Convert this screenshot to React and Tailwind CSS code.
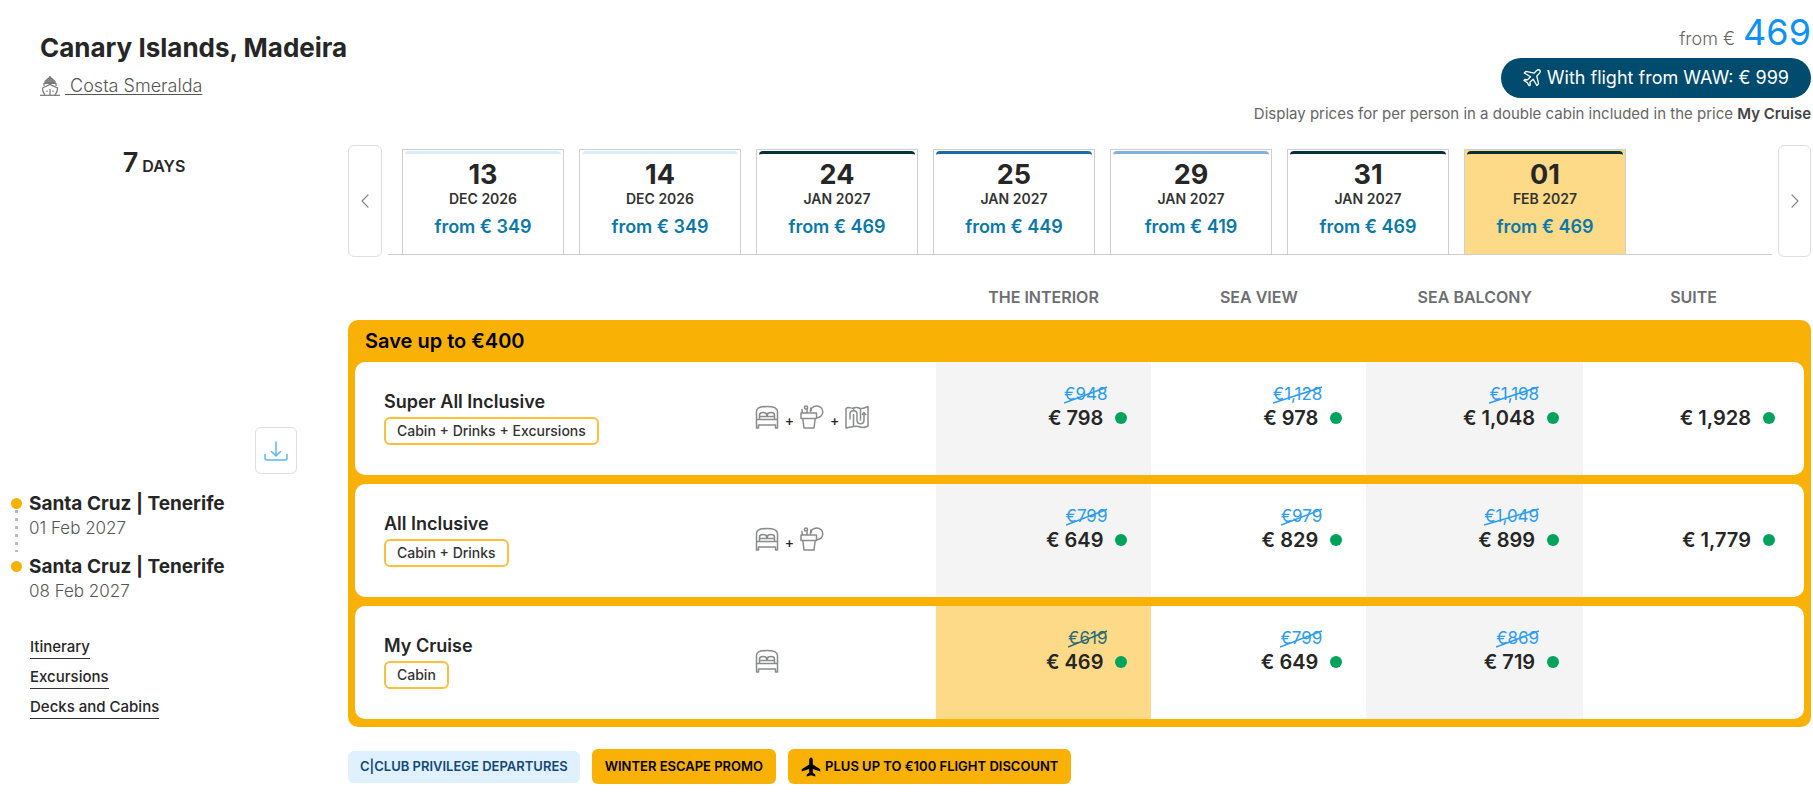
import React from "react";
import { ChevronLeft, ChevronRight } from "lucide-react";

const departures = [
  { day: "13", month: "DEC 2026", price: "349", band: "border-[#d9eefc]" },
  { day: "14", month: "DEC 2026", price: "349", band: "border-[#d9eefc]" },
  { day: "24", month: "JAN 2027", price: "469", band: "border-[#04303f]" },
  { day: "25", month: "JAN 2027", price: "449", band: "border-[#1a6ba5]" },
  { day: "29", month: "JAN 2027", price: "419", band: "border-[#82b1e0]" },
  { day: "31", month: "JAN 2027", price: "469", band: "border-[#04303f]" },
  { day: "01", month: "FEB 2027", price: "469", band: "border-[#04303f]", selected: true },
];

const cabins = ["THE INTERIOR", "SEA VIEW", "SEA BALCONY", "SUITE"];

const fares = [
  {
    name: "Super All Inclusive",
    includes: "Cabin + Drinks + Excursions",
    icons: ["bed", "drink", "map"],
    prices: [
      { was: "€948", now: "798" },
      { was: "€1,128", now: "978" },
      { was: "€1,198", now: "1,048" },
      { now: "1,928" },
    ],
  },
  {
    name: "All Inclusive",
    includes: "Cabin + Drinks",
    icons: ["bed", "drink"],
    prices: [
      { was: "€799", now: "649" },
      { was: "€979", now: "829" },
      { was: "€1,049", now: "899" },
      { now: "1,779" },
    ],
  },
  {
    name: "My Cruise",
    includes: "Cabin",
    icons: ["bed"],
    prices: [
      { was: "€619", now: "469", selected: true },
      { was: "€799", now: "649" },
      { was: "€869", now: "719" },
      null,
    ],
  },
];

const stops = [
  { port: "Santa Cruz | Tenerife", date: "01 Feb 2027" },
  { port: "Santa Cruz | Tenerife", date: "08 Feb 2027" },
];

const rowGrid = "grid grid-cols-[400fr_181fr_216fr_215fr_217fr_221fr]";

function ShipIcon() {
  return (
    <svg viewBox="0 0 20 20" className="size-5" fill="none" stroke="#777" strokeWidth="1.2">
      <path d="M0 19.3h20" />
      <path d="M5 5.5 8 2.5h4l3 3v2H5z" fill="#888" />
      <path d="M8.5 2.5 10 .5l1.500 2" fill="#777" />
      <path d="M4 10V7.500l6-1 6 1V10" />
      <path d="M2.500 12 10 8.500 17.500 12c.3 3-1 5-2.500 7M2.500 12c-.3 3 1 5 2.500 7" />
      <path d="M10 13v6" />
      <path d="M7 14.500v1.500M13 14.500v1.500" />
    </svg>
  );
}

function OutlinePlane() {
  return (
    <svg viewBox="0 0 18 18" className="size-[18px]" fill="none" stroke="white" strokeWidth="1.300" strokeLinejoin="round">
      <path d="M16.800 1.200c-1.200-.8-2.600-.2-3.600.8L11 4.200 3 2.300 1.300 4l6.200 3.700-3 3.200-2.600-.4-.9 1 3.200 2.100 2.100 3.200 1-.9-.4-2.600 3.300-3L13.900 16.500l1.700-1.700L13.800 7 16 4.800c1-1 1.500-2.500.8-3.600z" />
    </svg>
  );
}

function SolidPlane() {
  return (
    <svg viewBox="0 0 20 20" className="size-5" fill="black">
      <path d="M10 .5c-1.100 0-1.800 1.300-1.800 3v3.900L.7 12.200v2.200l7.500-2.300v3.600l-2.500 1.900v1.900L10 18.200l4.300 1.300v-1.900l-2.500-1.900v-3.600l7.500 2.300v-2.200l-7.500-4.800V3.500c0-1.700-.7-3-1.800-3z" />
    </svg>
  );
}

function DownloadIcon() {
  return (
    <svg viewBox="0 0 24 20" className="h-5 w-6" fill="none" stroke="#5cb5f2" strokeWidth="1.500" strokeLinecap="round" strokeLinejoin="round">
      <path d="M12 1v13.500M7.500 10.500l4.500 4.500 4.500-4.500" />
      <path d="M1 13.500V17c0 1.200.8 2 2 2h18c1.200 0 2-.8 2-2v-3.500" />
    </svg>
  );
}

function FareIcon({ kind }) {
  return (
    <svg viewBox="0 0 24 24" className="size-6" fill="none" stroke="#8a8b8d" strokeWidth="1.500" strokeLinejoin="round">
      {kind === "bed" && (
        <>
          <path d="M1.500 23V6.500C1.500 3 5 1.500 12 1.500S22.500 3 22.500 6.500V23h-2v-3h-17v3z" />
          <path d="M1.500 14.500h21" />
          <path d="M4.500 14V10c0-3.300 7.200-3.300 7.200 0v1.500M12.300 11.500V10c0-3.300 7.200-3.300 7.200 0v4" />
          <path d="M4.500 11.500h15" />
        </>
      )}
      {kind === "drink" && (
        <>
          <path d="M1 8h15.500v5.500h-1.300L14 23H4l-1.200-9.500H1z" />
          <path d="M3 13.500h12" />
          <path d="M7 8V2.800M2.500 8 1.800 4" />
          <circle cx="6" cy="2.500" r="1.600" />
          <path d="M10.500 7.500C10 3.500 13 1 16.800 1c3.500 0 6 2.700 6 5.800 0 3.500-2.800 6-6.200 5.900" />
          <path d="m10.500 2.500 1 3.500" />
        </>
      )}
      {kind === "map" && (
        <>
          <path d="M1 3.500c3-2.500 5 .5 7.500-.5s4.500-.5 7 .5c2.500.5 4.500-.5 7.500-2V21c-3 1.500-5 2-7.500 1s-4.500-1-7-.5S4 22 1 23z" />
          <path d="M8.500 3v2.500M15.500 3.500v12M8.500 21.500V9" />
          <path d="M5 14.500V9c0-4.500 7-4.500 7 0v6c0 5 7 5 7 0V8" />
          <path d="m17 10 2-2.500 2 2.500" />
        </>
      )}
    </svg>
  );
}

function DepartureTab({ day, month, price, band, selected }) {
  return (
    <button
      type="button"
      className={`flex h-[105px] w-[162px] flex-col items-center border border-b-0 border-[#cfcfcf] px-[2px] pt-px ${
        selected ? "bg-[#fcda88]" : "bg-white"
      }`}
    >
      <span className={`h-1 w-full rounded-t-[4px] border-t-[3px] ${band}`} />
      <span className="mt-1 text-[27px] leading-8 font-bold text-[#262626]">{day}</span>
      <span className="text-sm leading-4 font-semibold text-[#333]">{month}</span>
      <span className="mt-2 text-lg leading-6 font-semibold text-[#0a78a8]">from € {price}</span>
    </button>
  );
}

function PriceCell({ price, shaded, last }) {
  if (!price) return <td />;
  const background = price.selected ? "bg-[#fcda88]" : shaded ? "bg-[#f4f4f4]" : "";
  return (
    <td className={`${background} ${last ? "pr-[29px]" : "pr-6"} pt-[22px]`}>
      <div className="flex h-5 justify-end pr-5">
        {price.was && (
          <s className={`relative text-[17px] leading-5 no-underline ${price.selected ? "text-[#2b6a75]" : "text-[#2b9df0]"}`}>
            {price.was}
            <svg viewBox="0 0 40 20" preserveAspectRatio="none" className="absolute inset-0 size-full">
              <path d="M0 19 40 3" stroke="currentColor" strokeWidth="1.500" />
            </svg>
          </s>
        )}
      </div>
      <button type="button" className="ml-auto flex items-center gap-3 text-xl leading-7 font-semibold text-[#262626]">
        <span>€ {price.now}</span>
        <span className="size-3 rounded-full bg-[#00a35c]" />
      </button>
    </td>
  );
}

export default function App() {
  return (
    <main className="bg-white pr-[2px] font-['Inter','Liberation_Sans',sans-serif] text-[#262626]">
      <header className="flex justify-between pl-10">
        <div className="pt-8">
          <h1 className="text-[26px] leading-8 font-bold">Canary Islands, Madeira</h1>
          <a href="#ship" className="mt-2 flex items-center gap-[5px] text-lg leading-7 font-light text-[#555]">
            <ShipIcon />
            <span className="whitespace-pre underline underline-offset-2"> Costa Smeralda</span>
          </a>
        </div>
        <div className="flex flex-col items-end">
          <p className="flex h-[58px] items-baseline gap-2 pt-2">
            <span className="text-lg font-light text-[#666]">from €</span>
            <span className="text-4xl leading-[48px] text-[#0d92f4]">469</span>
          </p>
          <button type="button" className="flex h-10 items-center gap-[6px] rounded-full bg-[#004b6e] px-[22px] text-lg text-white">
            <OutlinePlane />
            With flight from WAW: € 999
          </button>
          <p className="mt-1 text-[15px] leading-6 text-[#666]">
            Display prices for per person in a double cabin included in the price{" "}
            <strong className="font-semibold text-[#444]">My Cruise</strong>
          </p>
        </div>
      </header>

      <div className="mt-[19px] flex">
        <aside className="w-[348px] shrink-0">
          <p className="w-[308px] text-center font-semibold">
            <span className="text-[27px] leading-9">7</span> <span className="text-base">DAYS</span>
          </p>
          <div className="mt-[246px] flex w-[297px] justify-end">
            <button type="button" aria-label="Download" className="flex h-[47px] w-[42px] items-center justify-center rounded-md border border-[#dedede] bg-white">
              <DownloadIcon />
            </button>
          </div>
          <ol className="mt-4 pl-[11px]">
            {stops.map((stop, i) => (
              <li key={stop.date} className="flex gap-[7px]">
                <div className="flex w-[11px] flex-col items-center pt-2">
                  <span className="size-[11px] shrink-0 rounded-full bg-[#f9b106]" />
                  {i === 0 && (
                    <svg viewBox="0 0 3 44" className="h-11 w-[3px]">
                      <path d="M1.500 1v42" stroke="#b4b8c0" strokeWidth="3" strokeDasharray="3 5" />
                    </svg>
                  )}
                </div>
                <div className="h-[55px]">
                  <p className="text-[19px] leading-7 font-bold whitespace-nowrap">{stop.port}</p>
                  <p className="text-[17px] leading-5 font-light text-[#555]">{stop.date}</p>
                </div>
              </li>
            ))}
          </ol>
          <nav className="mt-[27px] flex flex-col items-start gap-[6px] pl-[30px] text-[15px] leading-[23px] font-medium">
            <a href="#itinerary" className="border-b border-[#333]">Itinerary</a>
            <a href="#excursions" className="border-b border-[#333]">Excursions</a>
            <a href="#decks" className="border-b border-[#333]">Decks and Cabins</a>
          </nav>
        </aside>

        <section className="min-w-0 flex-1">
          <div className="flex items-start">
            <button type="button" aria-label="Earlier departures" className="flex h-28 w-[34px] shrink-0 items-center justify-center rounded-md border border-[#dedede]">
              <ChevronLeft className="size-6 text-[#888]" strokeWidth={1.2} />
            </button>
            <div className="mx-[6px] mt-1 flex min-w-0 flex-1 gap-[15px] overflow-hidden border-b border-[#cfcfcf] pl-[14px]">
              {departures.map((d) => (
                <DepartureTab key={d.day + d.month} {...d} />
              ))}
            </div>
            <button type="button" aria-label="Later departures" className="flex h-28 w-[33px] shrink-0 items-center justify-center rounded-md border border-[#dedede]">
              <ChevronRight className="size-6 text-[#888]" strokeWidth={1.2} />
            </button>
          </div>

          <table className="mt-7 block">
            <thead className="block px-[7px]">
              <tr className={rowGrid}>
                <td className="col-span-2" />
                {cabins.map((c) => (
                  <th key={c} scope="col" className="h-[35px] text-base leading-6 font-semibold text-[#6d6e71]">
                    {c}
                  </th>
                ))}
              </tr>
            </thead>
            <tbody className="flex flex-col gap-[9px] rounded-[10px] bg-[#f9b106] px-[7px] pb-2">
              <tr className="-mb-[9px] block">
                <th colSpan={6} className="block h-[42px] px-[10px] text-left text-xl leading-[42px] font-semibold text-black">
                  Save up to €400
                </th>
              </tr>
              {fares.map((fare) => (
                <tr key={fare.name} className={`${rowGrid} h-[113px] overflow-hidden rounded-[10px] bg-white`}>
                  <th scope="row" className="pt-[26px] pl-[29px] text-left">
                    <span className="block text-lg leading-7 font-semibold">{fare.name}</span>
                    <span className="mt-px inline-block h-7 rounded-md border-2 border-[#fac03b] px-[11px] text-sm leading-6 font-medium text-[#333]">
                      {fare.includes}
                    </span>
                  </th>
                  <td className="pt-[43px]">
                    <div className="flex items-center gap-[6px]">
                      {fare.icons.map((kind, i) => (
                        <React.Fragment key={kind}>
                          {i > 0 && <span className="pt-2 text-sm leading-4 font-medium">+</span>}
                          <FareIcon kind={kind} />
                        </React.Fragment>
                      ))}
                    </div>
                  </td>
                  {fare.prices.map((p, i) => (
                    <PriceCell key={cabins[i]} price={p} shaded={i % 2 === 0} last={i === 3} />
                  ))}
                </tr>
              ))}
            </tbody>
          </table>

          <ul className="mt-[22px] flex items-center gap-3 text-[13px] font-semibold text-black">
            <li className="flex h-8 items-center rounded-md bg-[#dff1fe] px-3 text-[#15487a]">C|CLUB PRIVILEGE DEPARTURES</li>
            <li className="flex h-[35px] items-center rounded-md bg-[#f9b106] px-[13px]">WINTER ESCAPE PROMO</li>
            <li className="flex h-[35px] items-center gap-1 rounded-md bg-[#f9b106] px-[13px]">
              <SolidPlane />
              PLUS UP TO €100 FLIGHT DISCOUNT
            </li>
          </ul>
        </section>
      </div>
    </main>
  );
}
